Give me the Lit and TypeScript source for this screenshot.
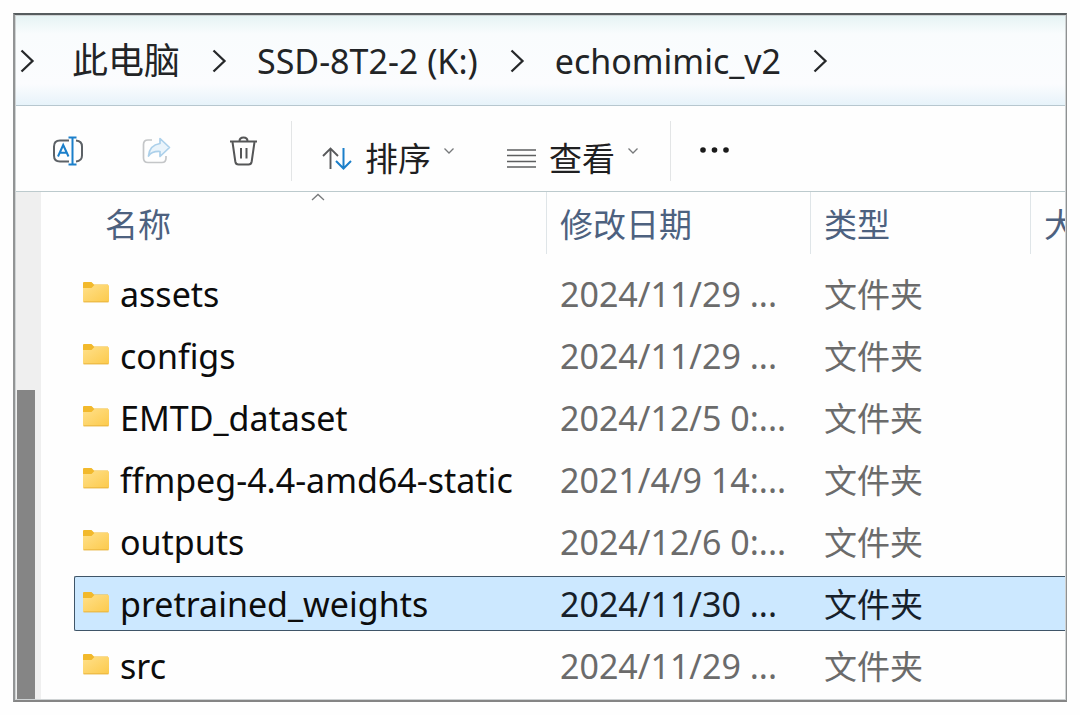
import { LitElement, html, svg, css } from "lit";
import { customElement, property, state } from "lit/decorators.js";
import { classMap } from "lit/directives/class-map.js";

interface Entry {
  name: string;
  date: string;
}

const crumbs = [
  { name: "此电脑", cjk: true },
  { name: "SSD-8T2-2 (K:)", cjk: false },
  { name: "echomimic_v2", cjk: false },
];

const entries: Entry[] = [
  { name: "assets", date: "2024/11/29 ..." },
  { name: "configs", date: "2024/11/29 ..." },
  { name: "EMTD_dataset", date: "2024/12/5 0:..." },
  { name: "ffmpeg-4.4-amd64-static", date: "2021/4/9 14:..." },
  { name: "outputs", date: "2024/12/6 0:..." },
  { name: "pretrained_weights", date: "2024/11/30 ..." },
  { name: "src", date: "2024/11/29 ..." },
];

const icons = {
  rename: svg`
    <g fill="none" stroke="#5c6166" stroke-width="2">
      <path d="M17 4.500H8Q2 4.500 2 10.500V19.500Q2 25.500 8 25.500H17"/>
      <path d="M24 4.500Q30 5 30 10.500V19.500Q30 25 24 25.500"/>
    </g>
    <g fill="none" stroke="#1b7fca" stroke-width="2">
      <path d="M20.500 2V28M16.500 1.500H24.500M16.500 28.500H24.500"/>
      <path d="M6 20.500L11.200 9L16.500 20.500M7.800 16.800H14.600"/>
    </g>`,
  share: svg`
    <path d="M12 4H8Q3.500 4 3.500 8.500V22Q3.500 26.500 8 26.500H22Q26 26.500 26 22V20" fill="none" stroke="#c4c6c8" stroke-width="1.700"/>
    <path d="M20 2.500L29.500 11.500L20 20.500V15.500Q12 15 8.500 20Q9.500 9 20 7.500Z" fill="#eaf4fb" stroke="#acd0ea" stroke-width="1.700" stroke-linejoin="round"/>`,
  trash: svg`
    <g fill="none" stroke="#555657" stroke-width="2" stroke-linejoin="round">
      <path d="M2 5.500H29M11.500 5Q11.500 1.500 15.500 1.500Q19.500 1.500 19.500 5"/>
      <path d="M4.500 6L7.300 25.500Q7.800 28.500 10.500 28.500H20.500Q23.200 28.500 23.700 25.500L26.500 6"/>
      <path d="M13 12V22.500M18.500 12V22.500"/>
    </g>`,
  sort: svg`
    <path d="M9.500 26V5.500M2 13L9.500 5.500L17 13" fill="none" stroke="#58595b" stroke-width="1.900"/>
    <path d="M22.500 5V25.500M15 18L22.500 25.500L30 18" fill="none" stroke="#1b7fca" stroke-width="2"/>`,
  view: svg`<path d="M2 7H31M2 12.500H31M2 18.500H31M2 24H31" stroke="#5e5f60" stroke-width="1.700"/>`,
  more: svg`<g fill="#1b1b1b"><circle cx="3" cy="14" r="2.800"/><circle cx="14.500" cy="14" r="2.800"/><circle cx="26" cy="14" r="2.800"/></g>`,
};

const icon = (name: keyof typeof icons) =>
  html`<svg class="icon" viewBox="0 0 32 30" aria-hidden="true">${icons[name]}</svg>`;

const caret = html`<svg class="caret" viewBox="0 0 12 8" aria-hidden="true">
  <path d="M1.500 1.500L6 6L10.500 1.500" fill="none" stroke="#77797b" stroke-width="1.300" />
</svg>`;

const chevron = html`<svg class="chevron" viewBox="0 0 16 26" aria-hidden="true">
  <path d="M2.500 2.500L13.500 13L2.500 23.500" fill="none" stroke="#26282a" stroke-width="2.300" />
</svg>`;

const folder = html`<svg class="folder" viewBox="0 0 28 24" aria-hidden="true">
  <defs>
    <linearGradient id="face" x1="0" y1="0" x2="1" y2="1">
      <stop offset="0" stop-color="#ffe08a" />
      <stop offset="1" stop-color="#fcca4c" />
    </linearGradient>
  </defs>
  <path d="M1 3Q1 2 2 2H9.500L12 4.500H26V10H1Z" fill="#f2b92c" />
  <path d="M1 8H9.500L12.500 5H26Q27 5 27 6V21Q27 22 26 22H2Q1 22 1 21Z" fill="url(#face)" />
  <path d="M1.500 21.900H26.500" stroke="#e9b23a" stroke-width="1" />
</svg>`;

const base = css`
  :host {
    display: block;
    box-sizing: border-box;
  }
  *,
  *::before {
    box-sizing: border-box;
  }
  button {
    margin: 0;
    padding: 0;
    border: 0;
    background: none;
    font: inherit;
    color: inherit;
    cursor: default;
  }
`;

@customElement("path-bar")
export class PathBar extends LitElement {
  static styles = [
    base,
    css`
      .bar {
        display: flex;
        align-items: center;
        height: 90px;
        border-bottom: 1px solid #b7c7cf;
        background: linear-gradient(#e6f3f4, #f9fcfd 18px, #fbfcfe 68px, #e7f3fa);
        overflow: hidden;
      }
      .crumbs {
        display: flex;
        align-items: center;
        gap: 31px;
        margin: 0;
        padding: 0 0 0 3px;
        list-style: none;
      }
      .crumb {
        display: flex;
        align-items: center;
        gap: 30px;
      }
      .link {
        color: #222426;
        font-size: 34px;
        line-height: 48px;
        text-decoration: none;
        white-space: nowrap;
      }
      .cjk {
        padding-left: 7px;
        font-size: 36px;
      }
      .chevron {
        display: block;
        width: 16px;
        height: 26px;
      }
    `,
  ];

  render() {
    return html`<nav class="bar" aria-label="路径">
      <ol class="crumbs">
        ${crumbs.map(
          (c) => html`<li class="crumb">
            ${chevron}<a class=${classMap({ link: true, cjk: c.cjk })} href="#">${c.name}</a>
          </li>`
        )}
        <li class="crumb">${chevron}</li>
      </ol>
    </nav>`;
  }
}

@customElement("command-bar")
export class CommandBar extends LitElement {
  static styles = [
    base,
    css`
      .bar {
        display: flex;
        align-items: center;
        height: 86px;
        padding: 4px 0 0 36px;
        border-bottom: 1px solid #bccacd;
        background: #fefefe;
        overflow: hidden;
      }
      .group {
        display: flex;
        align-items: center;
        gap: 56px;
        flex: none;
      }
      .menus {
        gap: 50px;
      }
      .icon {
        display: block;
        flex: none;
        width: 32px;
        height: 30px;
      }
      .menu {
        display: flex;
        align-items: center;
        gap: 12px;
        padding-top: 14px;
        color: #1f2021;
        font-size: 33px;
        line-height: 44px;
        white-space: nowrap;
      }
      .label {
        padding-top: 3px;
      }
      .caret {
        display: block;
        width: 12px;
        height: 8px;
        margin-bottom: 14px;
      }
      .rule {
        flex: none;
        width: 1px;
        height: 60px;
        margin: 0 29px 0 31px;
        background: #e3e5e6;
      }
    `,
  ];

  render() {
    return html`<div class="bar" role="toolbar">
      <div class="group">
        <button aria-label="重命名">${icon("rename")}</button>
        <button aria-label="共享" disabled>${icon("share")}</button>
        <button aria-label="删除">${icon("trash")}</button>
      </div>
      <span class="rule"></span>
      <div class="group menus">
        <button class="menu">${icon("sort")}<span class="label">排序</span>${caret}</button>
        <button class="menu">${icon("view")}<span class="label">查看</span>${caret}</button>
      </div>
      <span class="rule"></span>
      <button aria-label="更多">${icon("more")}</button>
    </div>`;
  }
}

@customElement("file-list")
export class FileList extends LitElement {
  @property({ attribute: false }) entries: Entry[] = [];
  @state() private selected = "pretrained_weights";

  static styles = [
    base,
    css`
      .table {
        width: 100%;
        table-layout: fixed;
        border-collapse: collapse;
        font-size: 34px;
        line-height: 48px;
        text-align: left;
      }
      .col-name {
        width: 472px;
      }
      .col-date {
        width: 264px;
      }
      .col-type {
        width: 220px;
      }
      th {
        height: 70px;
        padding: 0;
        vertical-align: top;
        overflow: hidden;
        font-weight: 400;
        font-size: 33px;
        color: #4d617f;
      }
      .head {
        display: block;
        position: relative;
        width: 100%;
        height: 62px;
        padding: 3px 0 0 13px;
        border-left: 1px solid #dfe5e8;
        text-align: left;
        white-space: nowrap;
      }
      .head-name {
        padding-left: 30px;
        border-left-color: transparent;
      }
      .sorted {
        position: absolute;
        top: 1px;
        left: 50%;
        width: 14px;
        height: 8px;
      }
      td {
        height: 62px;
        padding: 0;
        color: #6b6b6b;
      }
      .cell {
        display: flex;
        align-items: center;
        height: 55px;
        padding: 2px 0 0 14px;
        border: 1px solid transparent;
        border-width: 1px 0;
        overflow: hidden;
        white-space: nowrap;
      }
      .cell-name {
        gap: 10px;
        padding-left: 7px;
        border-left-width: 1px;
        color: #0c0c0c;
      }
      .cell-type {
        padding-top: 4px;
        font-size: 33px;
      }
      .selected .cell {
        border-color: #3f5568;
        background: #cce8ff;
        color: #16202a;
      }
      .selected .cell-name {
        border-radius: 2px 0 0 2px;
        color: #0c0c0c;
      }
      .folder {
        flex: none;
        width: 28px;
        height: 24px;
        margin-bottom: 4px;
      }
    `,
  ];

  render() {
    return html`<table class="table">
      <colgroup>
        <col class="col-name" />
        <col class="col-date" />
        <col class="col-type" />
        <col />
      </colgroup>
      <thead>
        <tr>
          <th scope="col" aria-sort="ascending">
            <button class="head head-name">
              名称<svg class="sorted" viewBox="0 0 14 8" aria-hidden="true">
                <path d="M1 7L7 1.500L13 7" fill="none" stroke="#77797b" stroke-width="1.300" />
              </svg>
            </button>
          </th>
          <th scope="col"><button class="head">修改日期</button></th>
          <th scope="col"><button class="head">类型</button></th>
          <th scope="col"><button class="head">大小</button></th>
        </tr>
      </thead>
      <tbody>
        ${this.entries.map(
          (e) => html`<tr
            class=${classMap({ selected: e.name === this.selected })}
            @click=${() => (this.selected = e.name)}
          >
            <td><div class="cell cell-name">${folder}<span>${e.name}</span></div></td>
            <td><div class="cell">${e.date}</div></td>
            <td><div class="cell cell-type">文件夹</div></td>
            <td><div class="cell"></div></td>
          </tr>`
        )}
      </tbody>
    </table>`;
  }
}

@customElement("app-root")
export class AppRoot extends LitElement {
  static styles = [
    base,
    css`
      :host {
        min-height: 100vh;
        padding: 13px;
        background: #fefefe;
        font-family: "Noto Sans", "Noto Sans CJK SC", sans-serif;
      }
      .window {
        padding: 1px;
        border: 2px solid;
        border-color: #565c5e #8f9192 #858585 #929495;
        border-right-width: 1px;
        background: #cfd3d4;
        overflow: hidden;
      }
      .body {
        display: flex;
        background: #fefefe;
      }
      .track {
        display: flex;
        flex-direction: column;
        justify-content: flex-end;
        flex: none;
        width: 25px;
        padding-left: 1px;
        background: #efefef;
      }
      .thumb {
        width: 18px;
        height: 61%;
        background: #858585;
      }
      .files {
        flex: 1;
        min-width: 0;
        padding: 0 0 3px 33px;
      }
    `,
  ];

  render() {
    return html`<main class="window">
      <path-bar></path-bar>
      <command-bar></command-bar>
      <div class="body">
        <div class="track"><div class="thumb"></div></div>
        <file-list class="files" .entries=${entries}></file-list>
      </div>
    </main>`;
  }
}
